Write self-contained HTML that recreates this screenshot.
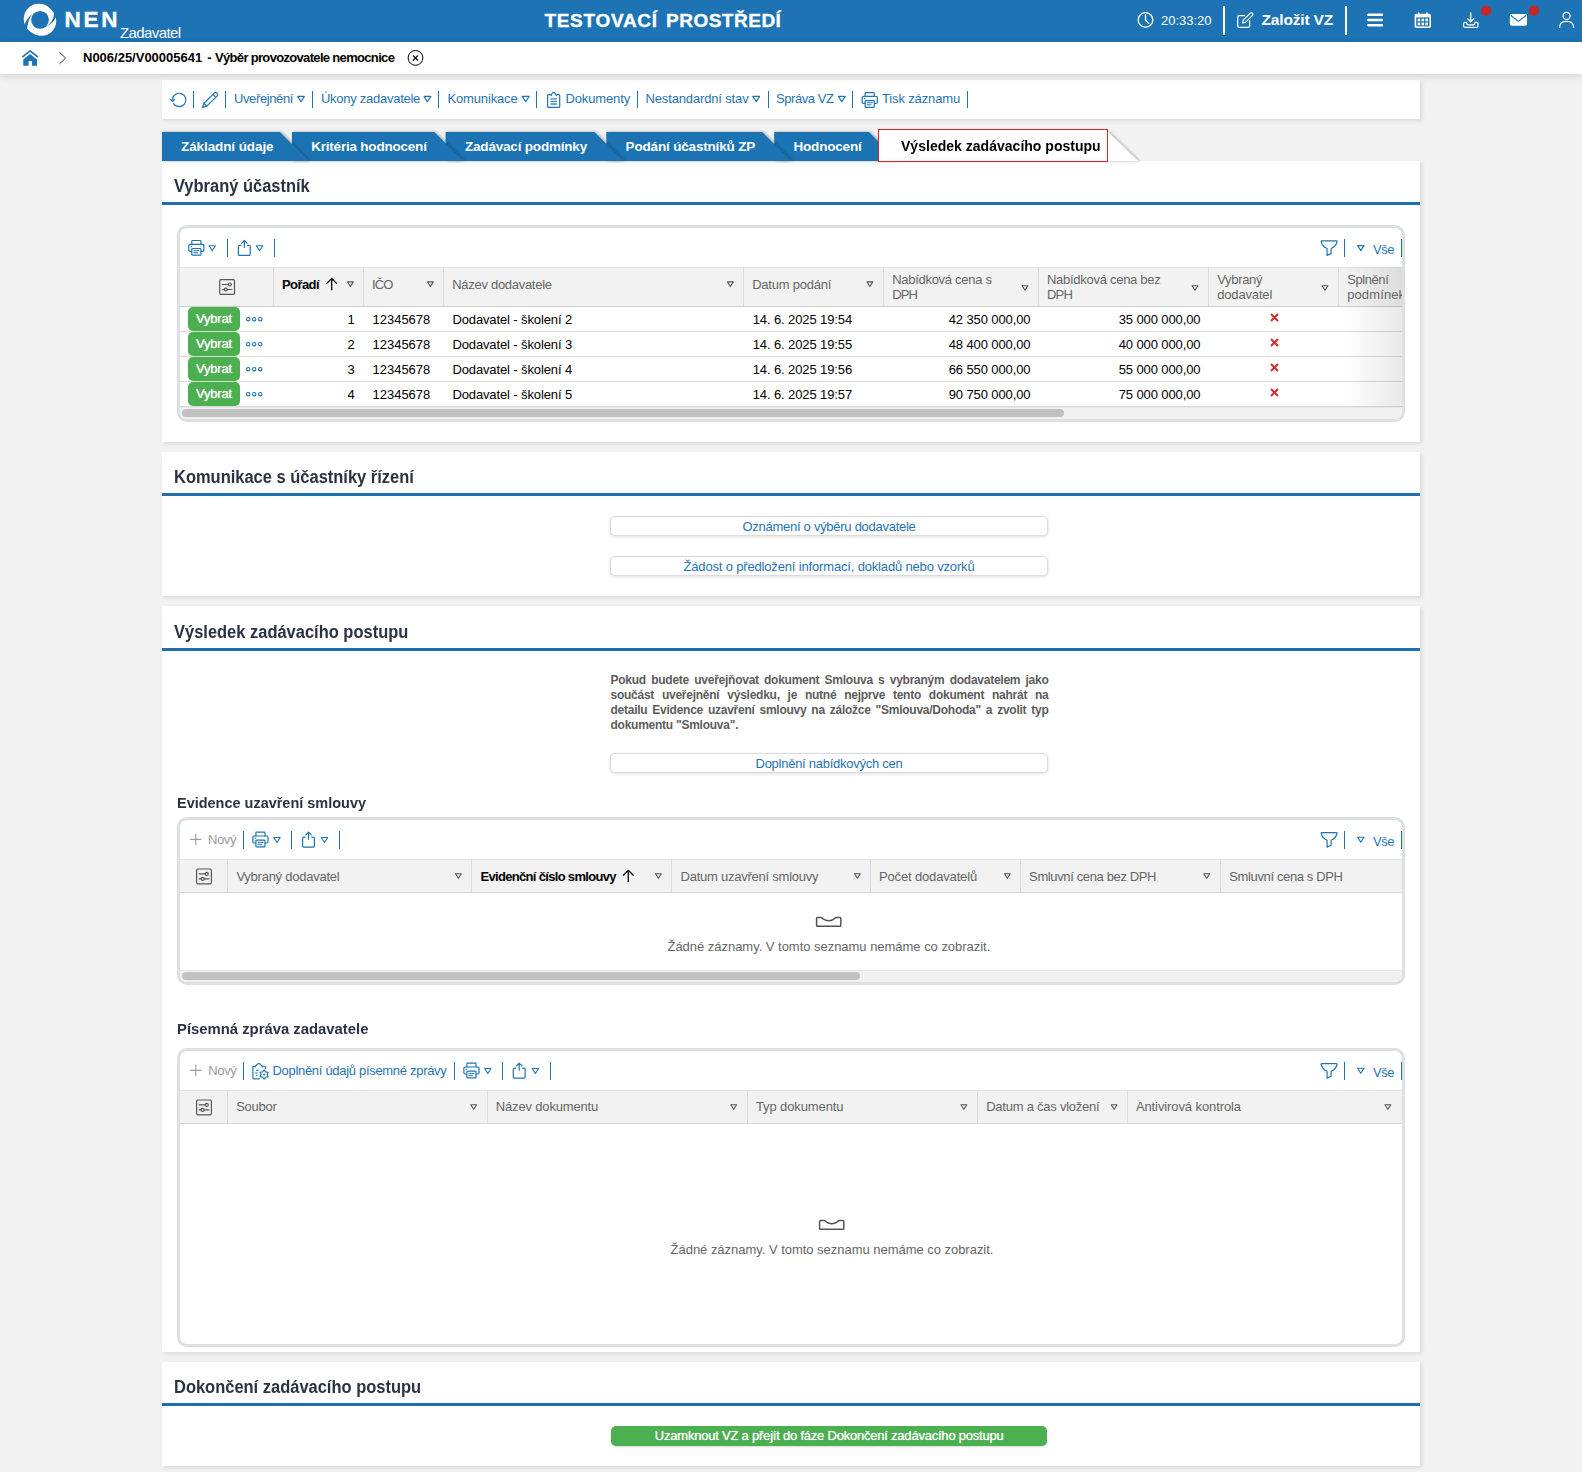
<!DOCTYPE html>
<html lang="cs">
<head>
<meta charset="utf-8">
<title>NEN - Výsledek zadávacího postupu</title>
<style>
*{box-sizing:border-box;margin:0;padding:0}
html,body{width:1582px;height:1472px;overflow:hidden}
body{background:#f2f2f2;font-family:"Liberation Sans",sans-serif;font-size:13px;color:#000;position:relative}
.abs{position:absolute}
.t{position:absolute;white-space:nowrap;line-height:16px;z-index:3}
svg{position:absolute;overflow:visible}
#hdr{position:absolute;left:0;top:0;width:1582px;height:42px;background:#1d73b3}
#bc{position:absolute;left:0;top:42px;width:1582px;height:32px;background:#fff;box-shadow:0 2px 8px rgba(0,0,0,.145);z-index:5}
.panel{position:absolute;left:162px;width:1258px;background:#fff;box-shadow:2px 2px 4px rgba(0,0,0,.10)}
.h2{position:absolute;left:11.6px;top:13px;font-size:18px;font-weight:700;color:#2a3342;line-height:24px;white-space:nowrap;transform-origin:0 50%;transform:scaleX(.915)}
.hline{position:absolute;left:0;top:41px;width:100%;height:3px;background:#1d6fb0}
.blue{color:#1f74b3}
.tab{top:138.3px;font-size:13.5px;font-weight:700;color:#fff;line-height:18px}
.sep{position:absolute;width:1px;background:#1f74b3}
.tb .t{top:11px;color:#1f74b3}
.grid{position:absolute;left:15px;width:1228px;border:3px solid #dddfe0;border-radius:10px;background:#fff;overflow:hidden}
.ghead{position:absolute;left:0;width:100%;background:#f2f2f2;border-top:1px solid #e4e4e4;border-bottom:2px solid #dcdcdc}
.ghead .t{color:#666}
.csep{position:absolute;top:0;width:1px;height:100%;background:#dcdcdc}
.row{position:absolute;left:0;width:100%;height:25px;border-bottom:1px solid #dcdcdc}
.row .t{top:5px}
.btn{position:absolute;left:448px;width:438px;height:20px;border:1px solid #dcdcdc;border-radius:5px;background:#fff;box-shadow:0 1px 3px rgba(0,0,0,.14);text-align:center;color:#1f74b3;line-height:20px;font-size:13px}
.vyb{position:absolute;left:8px;top:.6px;width:52px;height:23.9px;border-radius:5px;background:#4caf50;color:#fff;text-align:center;line-height:23px;font-size:13px;text-shadow:0 0 1px rgba(255,255,255,.85)}
.para{position:absolute;left:448.5px;width:438px;font-size:12px;font-weight:700;color:#5c5c5c;line-height:15px;white-space:nowrap;text-align:justify;text-align-last:justify;letter-spacing:-.25px}
.sub{position:absolute;left:15px;font-size:15px;font-weight:700;color:#2a3342;white-space:nowrap;line-height:18px}
</style>
</head>
<body>

<svg width="0" height="0" style="position:absolute">
  <defs>
    <g id="i-print" fill="none" stroke-width="1.2" stroke-linecap="round" stroke-linejoin="round">
      <path d="M3.6 4.1 V1.2 Q3.6 .5 4.3 .5 H12 Q12.7 .5 12.7 1.2 V4.1"/>
      <path d="M3.4 11.3 H1.9 Q.6 11.3 .6 10 V5.6 Q.6 4.3 1.9 4.3 H14.4 Q15.7 4.3 15.7 5.6 V10 Q15.7 11.3 14.4 11.3 H12.9"/>
      <rect x="3.6" y="8.5" width="9.1" height="6.7" rx=".6"/>
      <path d="M5.6 10.7 H10.7 M5.6 12.7 H9.4" stroke-width="1"/>
      <path d="M2.7 6.4 H3.6" stroke-width="1"/>
    </g>
    <g id="i-share" fill="none" stroke-width="1.2" stroke-linecap="round" stroke-linejoin="round">
      <path d="M3.2 5.4 H1.6 Q.6 5.4 .6 6.4 V14.4 Q.6 15.4 1.6 15.4 H11.4 Q12.4 15.4 12.4 14.4 V6.4 Q12.4 5.4 11.4 5.4 H9.8"/>
      <path d="M6.5 .6 V7.5 M3.8 3.2 L6.5 .5 L9.2 3.2"/>
    </g>
    <path id="i-tri" d="M.6 .6 H7 L3.8 5.6 Z" fill="none" stroke-width="1.1" stroke-linejoin="round"/>
    <path id="i-trig" d="M.5 .5 H6.3 L3.4 5.1 Z" fill="none" stroke-width="1.1" stroke-linejoin="round"/>
    <g id="i-filter" fill="none" stroke-width="1.2" stroke-linejoin="round" stroke-linecap="round">
      <path d="M1 .9 H16 Q16.6 .9 16.4 1.6 Q15.5 6.3 10.5 8.5 V13.6 L6.5 15.5 V8.5 Q1.5 6.3 .6 1.6 Q.4 .9 1 .9 Z"/>
    </g>
    <g id="i-set" fill="none" stroke="#555" stroke-width="1.2" stroke-linecap="round">
      <rect x=".6" y=".6" width="14.8" height="14.8" rx="1.2"/>
      <path d="M3.2 5.5 H9.2 M3.2 10.5 H5 M8.4 10.5 H12.8"/>
      <circle cx="10.8" cy="5.5" r="1.5"/><circle cx="6.7" cy="10.5" r="1.5"/>
    </g>
    <g id="i-dots" fill="none" stroke="#1f74b3" stroke-width="1.1">
      <circle cx="2.2" cy="2.2" r="1.7"/><circle cx="8.2" cy="2.2" r="1.7"/><circle cx="14.2" cy="2.2" r="1.7"/>
    </g>
    <path id="i-x" d="M1 1 L8 8 M8 1 L1 8" stroke="#d32f2f" stroke-width="2" fill="none"/>
    <path id="i-up" d="M5.7 12.4 V1.4 M.8 6 L5.7 1.1 L10.6 6" stroke="#000" stroke-width="1.25" fill="none" stroke-linecap="round" stroke-linejoin="round"/>
    <path id="i-empty" d="M1.4 .6 H4.6 Q5.8 .6 7.2 1.8 Q9.6 3.7 12.7 3.7 Q15.8 3.7 18.2 1.8 Q19.6 .6 20.8 .6 H24 Q24.8 .6 24.8 1.4 V8.4 Q24.8 9.2 24 9.2 H1.4 Q.6 9.2 .6 8.4 V1.4 Q.6 .6 1.4 .6 Z" fill="none" stroke="#555" stroke-width="1.5"/>
  </defs>
</svg>

<!-- ================= HEADER ================= -->
<div id="hdr">
  <svg id="logo" style="left:24px;top:4px" width="32" height="32" viewBox="0 0 32 32">
    <circle cx="14.95" cy="14.95" r="15.2" fill="#fff"/>
    <circle cx="17.4" cy="17.05" r="14.8" fill="#fff"/>
    <circle cx="16" cy="15.9" r="8.9" fill="#1d73b3"/>
    <path d="M-0.2 23 Q2.1 14.6 8.5 9.8 Q4.5 14.4 2.9 25 L0 26 Z" fill="#1d73b3"/>
    <path d="M30.3 8.2 Q29.6 17.6 22.2 22.7 Q29 19 32.2 12.9 L32.5 8 Z" fill="#1d73b3"/>
  </svg>

  <svg style="left:0;top:0" width="1582" height="42" viewBox="0 0 1582 42" fill="none" stroke="#fff" stroke-linecap="round" stroke-linejoin="round">
    <!-- clock -->
    <circle cx="1145.5" cy="19.9" r="7.3" stroke-width="1.3"/>
    <path d="M1145.5 15 V20 L1148.6 23.4" stroke-width="1.3"/>
    <!-- edit -->
    <path d="M1244.5 15.6 H1239.3 Q1237.7 15.6 1237.7 17.2 V25.7 Q1237.7 27.3 1239.3 27.3 H1248 Q1249.6 27.3 1249.6 25.7 V21" stroke-width="1.3"/>
    <path d="M1243.2 20.2 L1250.3 13.1 Q1251.3 12.2 1252.4 13.2 Q1253.4 14.3 1252.5 15.3 L1245.4 22.4 L1242.6 23 Z" stroke-width="1.2"/>
    <!-- hamburger -->
    <path d="M1368.2 14.8 H1381.8 M1368.2 20 H1381.8 M1368.2 25.2 H1381.8" stroke-width="2.5"/>
    <!-- calendar -->
    <g stroke="none" fill="#fff">
      <rect x="1414.6" y="13.8" width="16.4" height="14.2" rx="1.8"/>
      <rect x="1418" y="12.3" width="1.5" height="3" rx=".7"/>
      <rect x="1426.2" y="12.3" width="1.5" height="3" rx=".7"/>
    </g>
    <g stroke="none" fill="#1d73b3">
      <rect x="1416.2" y="17.4" width="13.2" height="9" />
    </g>
    <g stroke="none" fill="#fff">
      <rect x="1417.6" y="18.6" width="2.6" height="2.7"/><rect x="1421.5" y="18.6" width="2.6" height="2.7"/><rect x="1425.4" y="18.6" width="2.6" height="2.7"/>
      <rect x="1417.6" y="22.6" width="2.6" height="2.7"/><rect x="1421.5" y="22.6" width="2.6" height="2.7"/><rect x="1425.4" y="22.6" width="2.6" height="2.7"/>
    </g>
    <!-- inbox download -->
    <path d="M1470.7 12.8 V21.6 M1467.6 18.6 L1470.7 21.7 L1473.8 18.6" stroke-width="1.3"/>
    <path d="M1466.6 22.4 H1464.9 Q1463.6 22.4 1463.6 23.7 V26 Q1463.6 27.3 1464.9 27.3 H1476.7 Q1478 27.3 1478 26 V23.7 Q1478 22.4 1476.7 22.4 H1474.9 Q1474.9 24.9 1472.6 24.9 H1468.9 Q1466.6 24.9 1466.6 22.4 Z" stroke-width="1.2"/>
    <circle cx="1486.1" cy="10.7" r="5.1" fill="#c62828" stroke="none"/>
    <!-- mail -->
    <g stroke="none" fill="#fff">
      <rect x="1509.9" y="14" width="17.1" height="11.8" rx="1.8"/>
    </g>
    <path d="M1511.2 15.8 L1518.45 21.4 L1525.7 15.8" stroke="#1d73b3" stroke-width="1.1"/>
    <circle cx="1534" cy="10.7" r="5.1" fill="#c62828" stroke="none"/>
    <!-- user -->
    <circle cx="1566.6" cy="15.9" r="3.5" stroke-width="1.3"/>
    <path d="M1559.6 27.4 Q1559.6 21.4 1566.6 21.4 Q1573.6 21.4 1573.6 27.4" stroke-width="1.3"/>
  </svg>
  <div class="t" style="left:64.5px;top:7.2px;font-size:22.5px;font-weight:700;color:#fff;line-height:26px;letter-spacing:2.7px;-webkit-text-stroke:.4px #fff">NEN</div>
  <div class="t" style="left:120px;top:24px;font-size:15px;color:#fff;line-height:18px"><span style="letter-spacing:-0.597px">Zadavatel</span></div>
  <div class="t" style="left:544.4px;top:10px;font-size:19px;font-weight:700;color:#fff;line-height:22px;-webkit-text-stroke:.35px #fff"><span style="letter-spacing:0.713px">TESTOVACÍ</span></div>
  <div class="t" style="left:666px;top:10px;font-size:19px;font-weight:700;color:#fff;line-height:22px;-webkit-text-stroke:.35px #fff"><span style="letter-spacing:0.505px">PROSTŘEDÍ</span></div>
  <div class="t" style="left:1161px;top:13px;font-size:13px;color:#fff"><span style="letter-spacing:-0.014px">20:33:20</span></div>
  <div class="abs" style="left:1223px;top:6px;width:2px;height:29px;background:#fff"></div>
  <div class="t" style="left:1261.5px;top:10.4px;font-size:15.5px;font-weight:700;color:#fff;line-height:20px"><span style="letter-spacing:-0.170px">Založit VZ</span></div>
  <div class="abs" style="left:1345px;top:6px;width:2px;height:29px;background:#fff"></div>
</div>

<!-- ================= BREADCRUMB ================= -->
<div id="bc">
  <svg style="left:0;top:0" width="460" height="32" viewBox="0 42 460 32" fill="none">
    <path d="M22.9 56.6 L30.1 50.8 L37.4 56.6" stroke="#1f74b3" stroke-width="1.7" stroke-linecap="round" stroke-linejoin="round"/>
    <path d="M30.1 53.9 L37 59.5 V65.8 H32 V61 H28.6 V65.8 H23.3 V59.5 Z" fill="#1f74b3"/>
    <path d="M59.4 52.2 L65.6 58.1 L59.4 64" stroke="#30343a" stroke-width="1"/>
    <circle cx="415.5" cy="57.9" r="7.4" stroke="#000" stroke-width="1"/>
    <path d="M412.9 55.3 L418.1 60.5 M418.1 55.3 L412.9 60.5" stroke="#000" stroke-width="1.2"/>
  </svg>

  <div class="t" style="left:83px;top:8px;font-weight:700;font-size:13px"><span style="letter-spacing:-0.005px">N006/25/V00005641</span></div>
  <div class="t" style="left:207.3px;top:8px;font-weight:700;font-size:13px">-</div>
  <div class="t" style="left:215px;top:8px;font-weight:700;font-size:13px"><span style="letter-spacing:-0.672px">Výběr provozovatele nemocnice</span></div>
</div>

<!-- ================= TOOLBAR ================= -->
<div class="panel tb" style="top:80px;height:39px">
  <svg style="left:0;top:0" width="1258" height="39" viewBox="162 80 1258 39" fill="none" stroke="#1f74b3" stroke-width="1.2" stroke-linecap="round" stroke-linejoin="round">
    <!-- refresh -->
    <path d="M172.5 100 A6.7 6.7 0 1 1 173.52 103.55"/>
    <path d="M170.3 99.3 L172.5 101.6 L174.7 99.3"/>
    <!-- pencil -->
    <g transform="translate(202.5 107.5) rotate(-44.5)">
      <path d="M0 0 L4 -2.05 H18.4 A2.05 2.05 0 0 1 18.4 2.05 H4 Z"/>
      <path d="M4 -2.05 V2.05 M16.6 -2.05 V2.05"/>
    </g>
    <!-- dropdown triangles -->
    <path d="M297.6 96.4 H304.4 L301 101.7 Z"/>
    <path d="M424 96.4 H430.8 L427.4 101.7 Z"/>
    <path d="M522.3 96.4 H529.1 L525.7 101.7 Z"/>
    <path d="M752.8 96.4 H759.6 L756.2 101.7 Z"/>
    <path d="M838.4 96.4 H845.2 L841.8 101.7 Z"/>
    <!-- clipboard -->
    <path d="M551.2 94.6 H548.6 Q547.6 94.6 547.6 95.6 V106.4 Q547.6 107.4 548.6 107.4 H558.7 Q559.7 107.4 559.7 106.4 V95.6 Q559.7 94.6 558.7 94.6 H556.2"/>
    <path d="M551.2 95.6 V94.4 Q551.9 94.2 552.2 93.4 Q552.7 92.4 553.7 92.4 Q554.7 92.4 555.2 93.4 Q555.5 94.2 556.2 94.4 V95.6"/>
    <path d="M550.4 98.9 H556.9 M550.4 101.4 H556.9 M550.4 104 H556.9" stroke-width="1.4" stroke-linecap="butt" opacity=".85"/>
    <!-- printer -->
    <path d="M865.2 96.2 V93.3 Q865.2 92.6 865.9 92.6 H873.6 Q874.3 92.6 874.3 93.3 V96.2"/>
    <path d="M865 103.4 H863.5 Q862.2 103.4 862.2 102.1 V97.7 Q862.2 96.4 863.5 96.4 H876 Q877.3 96.4 877.3 97.7 V102.1 Q877.3 103.4 876 103.4 H874.5"/>
    <rect x="865.2" y="100.6" width="9.1" height="6.7" rx=".6"/>
    <path d="M867.2 102.8 H872.3 M867.2 104.8 H871" stroke-width="1"/>
    <path d="M864.3 98.5 H865.2" stroke-width="1"/>
  </svg>

  <div class="sep" style="left:31px;top:11px;height:17px"></div>
  <div class="sep" style="left:63px;top:11px;height:17px"></div>
  <div class="t" style="left:72px"><span style="letter-spacing:-0.388px">Uveřejnění</span></div>
  <div class="sep" style="left:150px;top:11px;height:17px"></div>
  <div class="t" style="left:159px"><span style="letter-spacing:-0.271px">Úkony zadavatele</span></div>
  <div class="sep" style="left:276px;top:11px;height:17px"></div>
  <div class="t" style="left:285.5px"><span style="letter-spacing:-0.155px">Komunikace</span></div>
  <div class="sep" style="left:374px;top:11px;height:17px"></div>
  <div class="t" style="left:403.5px"><span style="letter-spacing:-0.139px">Dokumenty</span></div>
  <div class="sep" style="left:475px;top:11px;height:17px"></div>
  <div class="t" style="left:483.5px"><span style="letter-spacing:-0.148px">Nestandardní stav</span></div>
  <div class="sep" style="left:606px;top:11px;height:17px"></div>
  <div class="t" style="left:614px"><span style="letter-spacing:-0.436px">Správa VZ</span></div>
  <div class="sep" style="left:690px;top:11px;height:17px"></div>
  <div class="t" style="left:720px"><span style="letter-spacing:-0.143px">Tisk záznamu</span></div>
  <div class="sep" style="left:805px;top:11px;height:17px"></div>
</div>


<!-- ================= TABS ================= -->
<svg style="left:0;top:120px;z-index:2" width="1582" height="50" viewBox="0 120 1582 50">
  <defs>
    <filter id="ts" x="-10%" y="-30%" width="120%" height="160%"><feDropShadow dx="1.5" dy="0" stdDeviation="1.6" flood-color="#000" flood-opacity=".32"/></filter>
  </defs>
  <g fill="#1d73b3" filter="url(#ts)">
    <polygon points="774.2,132 868.9,132 897.9,161 774.2,161"/>
  </g>
  <g filter="url(#ts)"><polygon points="878,132 1108,132 1138,161 878,161" fill="#fff"/></g>
  <g fill="#1d73b3">
    <polygon filter="url(#ts)" points="606.4,132 762.2,132 791.2,161 606.4,161"/>
    <polygon filter="url(#ts)" points="445.6,132 594.4,132 623.4,161 445.6,161"/>
    <polygon filter="url(#ts)" points="292,132 434.3,132 463.3,161 292,161"/>
    <polygon filter="url(#ts)" points="162,132 279.8,132 308.8,161 162,161"/>
  </g>
  <rect x="878.5" y="129.5" width="229" height="32" fill="#fff" stroke="#e3222b" stroke-width="1"/>
</svg>
<div class="t tab" style="left:181px"><span style="letter-spacing:-0.092px">Základní údaje</span></div>
<div class="t tab" style="left:311.2px"><span style="letter-spacing:-0.209px">Kritéria hodnocení</span></div>
<div class="t tab" style="left:465px"><span style="letter-spacing:-0.194px">Zadávací podmínky</span></div>
<div class="t tab" style="left:625.6px"><span style="letter-spacing:-0.173px">Podání účastníků ZP</span></div>
<div class="t tab" style="left:793.5px"><span style="letter-spacing:-0.194px">Hodnocení</span></div>
<div class="t" style="left:900.8px;top:136px;font-size:15px;font-weight:700;color:#000;line-height:20px"><span style="display:inline-block;transform-origin:0 50%;transform:scaleX(0.9358)">Výsledek zadávacího postupu</span></div>

<!-- ================= SECTION 1 ================= -->
<div class="panel" style="top:161px;height:281px">
  <div class="h2">Vybraný účastník</div>
  <div class="hline"></div>

  <!-- grid 1 : page origin of inner box = (180,228) -->
  <div class="grid" style="left:15px;top:64px;height:197px">
    <svg style="left:0;top:0" width="1222" height="39" stroke="#1f74b3">
      <use href="#i-print" x="8.2" y="12"/>
      <use href="#i-tri" x="28.4" y="17.2"/>
      <use href="#i-share" x="57.8" y="12"/>
      <use href="#i-tri" x="75.8" y="17.2"/>
      <use href="#i-filter" x="1140.6" y="12"/>
      <use href="#i-tri" x="1177" y="17"/>
    </svg>
    <div class="sep" style="left:47px;top:11px;height:18px"></div>
    <div class="sep" style="left:94px;top:11px;height:18px"></div>
    <div class="sep" style="left:1164px;top:11px;height:18px"></div>
    <div class="sep" style="left:1221px;top:11px;height:18px"></div>
    <div class="t blue" style="left:1193px;top:14px"><span style="letter-spacing:-0.469px">Vše</span></div>
    <div class="ghead" style="top:39px;height:40px;border-bottom:1px solid #cdcdcd">
      <div class="csep" style="left:93px"></div>
      <div class="csep" style="left:183px"></div>
      <div class="csep" style="left:263px"></div>
      <div class="csep" style="left:563px"></div>
      <div class="csep" style="left:703px"></div>
      <div class="csep" style="left:858px"></div>
      <div class="csep" style="left:1028px"></div>
      <div class="csep" style="left:1158px"></div>
      <svg style="left:0;top:0" width="1222" height="38" stroke="#555">
        <use href="#i-set" x="39.1" y="11"/>
        <use href="#i-up" x="146" y="9.4"/>
        <use href="#i-trig" x="167" y="13.4"/>
        <use href="#i-trig" x="247" y="13.4"/>
        <use href="#i-trig" x="547" y="13.4"/>
        <use href="#i-trig" x="686.5" y="13.4"/>
        <use href="#i-trig" x="841.6" y="17.2"/>
        <use href="#i-trig" x="1011.6" y="17.2"/>
        <use href="#i-trig" x="1141.6" y="17.2"/>
      </svg>
      <div class="t" style="left:102px;top:9px;font-weight:700;color:#000"><span style="letter-spacing:-0.578px">Pořadí</span></div>
      <div class="t" style="left:192px;top:9px"><span style="letter-spacing:-0.875px">IČO</span></div>
      <div class="t" style="left:272.2px;top:9px"><span style="letter-spacing:-0.286px">Název dodavatele</span></div>
      <div class="t" style="left:572.2px;top:9px"><span style="letter-spacing:-0.223px">Datum podání</span></div>
      <div class="t" style="left:712.2px;top:4px;line-height:15px"><span style="letter-spacing:-0.286px">Nabídková cena s</span><br><span style="letter-spacing:-0.818px">DPH</span></div>
      <div class="t" style="left:867px;top:4px;line-height:15px"><span style="letter-spacing:-0.280px">Nabídková cena bez</span><br><span style="letter-spacing:-0.818px">DPH</span></div>
      <div class="t" style="left:1037.2px;top:4px;line-height:15px"><span style="letter-spacing:-0.317px">Vybraný</span><br><span style="letter-spacing:-0.155px">dodavatel</span></div>
      <div class="t" style="left:1167.2px;top:4px;line-height:15px"><span style="letter-spacing:-0.413px">Splnění</span><br><span style="letter-spacing:0.113px">podmínek</span></div>
    </div>
    <div class="row" style="top:78.5px">
      <div class="vyb"><span style="letter-spacing:-0.182px">Vybrat</span></div>
      <svg style="left:66.3px;top:10.3px" width="17" height="5"><use href="#i-dots"/></svg>
      <div class="t" style="right:1047.3px">1</div>
      <div class="t" style="left:192.6px"><span style="letter-spacing:-0.030px">12345678</span></div>
      <div class="t" style="left:272.4px"><span style="letter-spacing:-0.120px">Dodavatel - školení 2</span></div>
      <div class="t" style="left:572.7px"><span style="letter-spacing:-0.106px">14. 6. 2025 19:54</span></div>
      <div class="t" style="right:371.5px"><span style="letter-spacing:-0.103px">42 350 000,00</span></div>
      <div class="t" style="right:201.5px"><span style="letter-spacing:-0.103px">35 000 000,00</span></div>
      <svg style="left:1089.7px;top:6.4px" width="10" height="10"><use href="#i-x"/></svg>
    </div>
    <div class="row" style="top:103.5px">
      <div class="vyb"><span style="letter-spacing:-0.182px">Vybrat</span></div>
      <svg style="left:66.3px;top:10.3px" width="17" height="5"><use href="#i-dots"/></svg>
      <div class="t" style="right:1047.3px">2</div>
      <div class="t" style="left:192.6px"><span style="letter-spacing:-0.030px">12345678</span></div>
      <div class="t" style="left:272.4px"><span style="letter-spacing:-0.120px">Dodavatel - školení 3</span></div>
      <div class="t" style="left:572.7px"><span style="letter-spacing:-0.106px">14. 6. 2025 19:55</span></div>
      <div class="t" style="right:371.5px"><span style="letter-spacing:-0.103px">48 400 000,00</span></div>
      <div class="t" style="right:201.5px"><span style="letter-spacing:-0.103px">40 000 000,00</span></div>
      <svg style="left:1089.7px;top:6.4px" width="10" height="10"><use href="#i-x"/></svg>
    </div>
    <div class="row" style="top:128.5px">
      <div class="vyb"><span style="letter-spacing:-0.182px">Vybrat</span></div>
      <svg style="left:66.3px;top:10.3px" width="17" height="5"><use href="#i-dots"/></svg>
      <div class="t" style="right:1047.3px">3</div>
      <div class="t" style="left:192.6px"><span style="letter-spacing:-0.030px">12345678</span></div>
      <div class="t" style="left:272.4px"><span style="letter-spacing:-0.120px">Dodavatel - školení 4</span></div>
      <div class="t" style="left:572.7px"><span style="letter-spacing:-0.106px">14. 6. 2025 19:56</span></div>
      <div class="t" style="right:371.5px"><span style="letter-spacing:-0.103px">66 550 000,00</span></div>
      <div class="t" style="right:201.5px"><span style="letter-spacing:-0.103px">55 000 000,00</span></div>
      <svg style="left:1089.7px;top:6.4px" width="10" height="10"><use href="#i-x"/></svg>
    </div>
    <div class="row" style="top:153.5px">
      <div class="vyb"><span style="letter-spacing:-0.182px">Vybrat</span></div>
      <svg style="left:66.3px;top:10.3px" width="17" height="5"><use href="#i-dots"/></svg>
      <div class="t" style="right:1047.3px">4</div>
      <div class="t" style="left:192.6px"><span style="letter-spacing:-0.030px">12345678</span></div>
      <div class="t" style="left:272.4px"><span style="letter-spacing:-0.120px">Dodavatel - školení 5</span></div>
      <div class="t" style="left:572.7px"><span style="letter-spacing:-0.106px">14. 6. 2025 19:57</span></div>
      <div class="t" style="right:371.5px"><span style="letter-spacing:-0.103px">90 750 000,00</span></div>
      <div class="t" style="right:201.5px"><span style="letter-spacing:-0.103px">75 000 000,00</span></div>
      <svg style="left:1089.7px;top:6.4px" width="10" height="10"><use href="#i-x"/></svg>
    </div>
    <div class="abs" style="left:0;top:178.5px;width:1222px;height:13px;background:#f1f1f1;border-top:1px solid #e6e6e6"></div>
    <div class="abs" style="left:2.4px;top:181.2px;width:881.6px;height:7.8px;border-radius:4px;background:#c1c1c1"></div>
    <div class="abs" style="left:1162px;top:39px;width:60px;height:140px;background:linear-gradient(90deg,rgba(0,0,0,0),rgba(0,0,0,.085))"></div>
  </div>
</div>

<!-- ================= SECTION 2 ================= -->
<div class="panel" style="top:452px;height:144px">
  <div class="h2">Komunikace s účastníky řízení</div>
  <div class="hline"></div>
  <div class="btn" style="top:64px"><span style="letter-spacing:-0.274px">Oznámení o výběru dodavatele</span></div>
  <div class="btn" style="top:104px"><span style="letter-spacing:-0.163px">Žádost o předložení informací, dokladů nebo vzorků</span></div>
</div>

<!-- ================= SECTION 3 ================= -->
<div class="panel" style="top:606px;height:746px">
  <div class="h2" style="top:14px">Výsledek zadávacího postupu</div>
  <div class="hline" style="top:42px"></div>

  <div class="para" style="top:67px">Pokud budete uveřejňovat dokument Smlouva s vybraným dodavatelem jako</div>
  <div class="para" style="top:82px">součást uveřejnění výsledku, je nutné nejprve tento dokument nahrát na</div>
  <div class="para" style="top:97px">detailu Evidence uzavření smlouvy na záložce "Smlouva/Dohoda" a zvolit typ</div>
  <div class="para" style="top:112px;text-align-last:left">dokumentu "Smlouva".</div>
  <div class="btn" style="top:146.5px"><span style="letter-spacing:-0.259px">Doplnění nabídkových cen</span></div>

  <div class="sub" style="top:188px"><span style="display:inline-block;transform-origin:0 50%;transform:scaleX(0.9647)">Evidence uzavření smlouvy</span></div>
  <!-- grid 2: inner origin (180,820.3) -->
  <div class="grid" style="left:15px;top:211.2px;height:167.6px">
    <svg style="left:0;top:0" width="1222" height="39" stroke="#1f74b3">
      <path d="M10.2 19.4 H21.4 M15.8 13.8 V25" stroke="#9a9aa0" stroke-width="1.1" fill="none"/>
      <use href="#i-print" x="72.3" y="11.7"/>
      <use href="#i-tri" x="93.2" y="16.9"/>
      <use href="#i-share" x="122" y="11.7"/>
      <use href="#i-tri" x="140.7" y="16.9"/>
      <use href="#i-filter" x="1140.6" y="11.7"/>
      <use href="#i-tri" x="1177" y="16.7"/>
    </svg>
    <div class="t" style="left:27.9px;top:12px;color:#9a9aa0"><span style="letter-spacing:-0.331px">Nový</span></div>
    <div class="sep" style="left:63px;top:11px;height:18px"></div>
    <div class="sep" style="left:111px;top:11px;height:18px"></div>
    <div class="sep" style="left:159px;top:11px;height:18px"></div>
    <div class="sep" style="left:1164px;top:11px;height:18px"></div>
    <div class="sep" style="left:1221px;top:11px;height:18px"></div>
    <div class="t blue" style="left:1193px;top:14px"><span style="letter-spacing:-0.469px">Vše</span></div>
    <div class="ghead" style="top:39px;height:34px;border-bottom:1px solid #d6d6d6">
      <div class="csep" style="left:47.0px"></div>
      <div class="csep" style="left:291.0px"></div>
      <div class="csep" style="left:491.0px"></div>
      <div class="csep" style="left:690.0px"></div>
      <div class="csep" style="left:840.0px"></div>
      <div class="csep" style="left:1040.0px"></div>
      <svg style="left:0;top:0" width="1222" height="33.5" stroke="#555">
        <use href="#i-set" x="16" y="8.4"/>
        <use href="#i-trig" x="275.0" y="13.2"/>
        <use href="#i-trig" x="475.0" y="13.2"/>
        <use href="#i-trig" x="674.0" y="13.2"/>
        <use href="#i-trig" x="824.0" y="13.2"/>
        <use href="#i-trig" x="1023.3" y="13.2"/>
        <use href="#i-up" x="442.6" y="9.2"/>
      </svg>
      <div class="t" style="left:56.4px;top:8.9px;"><span style="letter-spacing:-0.247px">Vybraný dodavatel</span></div>
      <div class="t" style="left:300.4px;top:8.9px;font-weight:700;color:#000;"><span style="letter-spacing:-0.674px">Evidenční číslo smlouvy</span></div>
      <div class="t" style="left:500.6px;top:8.9px;"><span style="letter-spacing:-0.244px">Datum uzavření smlouvy</span></div>
      <div class="t" style="left:699.0px;top:8.9px;"><span style="letter-spacing:-0.154px">Počet dodavatelů</span></div>
      <div class="t" style="left:849.1px;top:8.9px;"><span style="letter-spacing:-0.370px">Smluvní cena bez DPH</span></div>
      <div class="t" style="left:1049.3px;top:8.9px;"><span style="letter-spacing:-0.369px">Smluvní cena s DPH</span></div>
    </div>

    <svg style="left:636.2px;top:96.8px" width="26" height="10"><use href="#i-empty"/></svg>
    <div class="t" style="left:487.5px;top:119.1px;color:#666"><span style="letter-spacing:-0.028px">Žádné záznamy. V tomto seznamu nemáme co zobrazit.</span></div>
    <div class="abs" style="left:0;top:149.5px;width:1222px;height:13px;background:#f1f1f1;border-top:1px solid #e6e6e6"></div>
    <div class="abs" style="left:2px;top:152px;width:678px;height:7.8px;border-radius:4px;background:#c1c1c1"></div>
  </div>

  <div class="sub" style="top:414px"><span style="display:inline-block;transform-origin:0 50%;transform:scaleX(0.9894)">Písemná zpráva zadavatele</span></div>
  <!-- grid 3: inner origin (180,1051.5) -->
  <div class="grid" style="left:15px;top:441.5px;height:299.5px">
    <svg style="left:0;top:0" width="1222" height="39" stroke="#1f74b3">
      <path d="M10.2 19.4 H21.4 M15.8 13.8 V25" stroke="#9a9aa0" stroke-width="1.1" fill="none"/>
      <g fill="none" stroke-width="1.15" stroke-linejoin="round" stroke-linecap="round" transform="translate(72 12)">
        <path d="M3.4 3.2 H1.9 Q.9 3.2 .9 4.2 V14.8 Q.9 15.8 1.9 15.8 H7.4 M10.2 3.2 H12.4 Q13.4 3.2 13.4 4.2 V5.8"/>
        <path d="M3.4 4 V3 Q4.3 2.8 4.7 1.8 Q5.3 .6 6.8 .6 Q8.3 .6 8.9 1.8 Q9.3 2.8 10.2 3 V4"/>
        <path d="M4 7.3 H6.8 M3.3 9.9 H5.6 M4 12.4 H5.6" stroke-width="1.3" stroke-linecap="butt" opacity=".8"/>
        <polygon points="12.10,6.90 13.65,8.82 16.08,9.20 15.20,11.50 16.08,13.80 13.65,14.18 12.10,16.10 10.55,14.18 8.12,13.80 9.00,11.50 8.12,9.20 10.55,8.82"/>
        <circle cx="12.1" cy="11.5" r="1.1" fill="#1f74b3" stroke="none"/>
      </g>
      <use href="#i-print" x="283.3" y="11.7"/>
      <use href="#i-tri" x="304" y="16.9"/>
      <use href="#i-share" x="332.7" y="11.7"/>
      <use href="#i-tri" x="351.6" y="16.9"/>
      <use href="#i-filter" x="1140.6" y="11.7"/>
      <use href="#i-tri" x="1177" y="16.7"/>
    </svg>
    <div class="t" style="left:28.2px;top:12px;color:#9a9aa0"><span style="letter-spacing:-0.331px">Nový</span></div>
    <div class="sep" style="left:63px;top:11px;height:18px"></div>
    <div class="t blue" style="left:92.5px;top:12px"><span style="letter-spacing:-0.305px">Doplnění údajů písemné zprávy</span></div>
    <div class="sep" style="left:274px;top:11px;height:18px"></div>
    <div class="sep" style="left:322px;top:11px;height:18px"></div>
    <div class="sep" style="left:370px;top:11px;height:18px"></div>
    <div class="sep" style="left:1164px;top:11px;height:18px"></div>
    <div class="sep" style="left:1221px;top:11px;height:18px"></div>
    <div class="t blue" style="left:1193px;top:14px"><span style="letter-spacing:-0.469px">Vše</span></div>
    <div class="ghead" style="top:39px;height:34px;border-bottom:1px solid #d6d6d6">
      <div class="csep" style="left:47.0px"></div>
      <div class="csep" style="left:307.0px"></div>
      <div class="csep" style="left:567.0px"></div>
      <div class="csep" style="left:797.0px"></div>
      <div class="csep" style="left:947.0px"></div>
      <svg style="left:0;top:0" width="1222" height="33.5" stroke="#555">
        <use href="#i-set" x="16" y="8.4"/>
        <use href="#i-trig" x="290.3" y="13.2"/>
        <use href="#i-trig" x="550.3" y="13.2"/>
        <use href="#i-trig" x="780.5" y="13.2"/>
        <use href="#i-trig" x="930.7" y="13.2"/>
        <use href="#i-trig" x="1204.5" y="13.2"/>
      </svg>
      <div class="t" style="left:56.2px;top:8.9px;"><span style="letter-spacing:-0.237px">Soubor</span></div>
      <div class="t" style="left:315.8px;top:8.9px;"><span style="letter-spacing:-0.165px">Název dokumentu</span></div>
      <div class="t" style="left:575.9px;top:8.9px;"><span style="letter-spacing:-0.107px">Typ dokumentu</span></div>
      <div class="t" style="left:806.2px;top:8.9px;"><span style="letter-spacing:-0.236px">Datum a čas vložení</span></div>
      <div class="t" style="left:955.9px;top:8.9px;"><span style="letter-spacing:-0.098px">Antivirová kontrola</span></div>
    </div>

    <svg style="left:639.1px;top:169.8px" width="26" height="10"><use href="#i-empty"/></svg>
    <div class="t" style="left:490.6px;top:191.1px;color:#666"><span style="letter-spacing:-0.028px">Žádné záznamy. V tomto seznamu nemáme co zobrazit.</span></div>
  </div>
</div>

<!-- ================= SECTION 4 ================= -->
<div class="panel" style="top:1362px;height:104px">
  <div class="h2">Dokončení zadávacího postupu</div>
  <div class="hline"></div>

  <div class="abs" style="left:449px;top:64.4px;width:436.4px;height:19.6px;border-radius:5px;background:#4caf50;color:#fff;text-align:center;font-size:13px;line-height:20.4px;text-shadow:0 0 1px rgba(255,255,255,.8);white-space:nowrap;box-shadow:0 1px 2px rgba(0,0,0,.15)"><span style="letter-spacing:-0.218px">Uzamknout VZ a přejít do fáze Dokončení zadávacího postupu</span></div>
</div>

</body>
</html>
